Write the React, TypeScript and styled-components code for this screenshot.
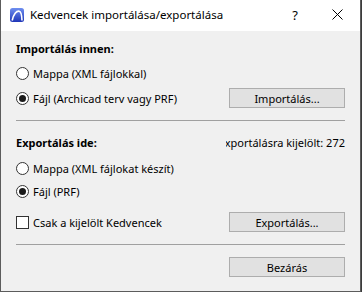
import styled, { createGlobalStyle } from "styled-components";

const GlobalStyle = createGlobalStyle`
  html, body {
    margin: 0;
    padding: 0;
    background: #3b3b3b;
  }
  body {
    font-family: "Noto Sans", "Liberation Sans", sans-serif;
    font-size: 11px;
    color: #000;
  }
`;

const ArchicadIcon = () => (
  <svg width="14" height="14" viewBox="0 0 14 14">
    <defs>
      <linearGradient id="acg" x1="0" y1="0" x2="0" y2="1">
        <stop offset="0" stopColor="#6f8ff0" />
        <stop offset="1" stopColor="#1f36b8" />
      </linearGradient>
    </defs>
    <rect x="0" y="0" width="14" height="14" rx="2.5" fill="url(#acg)" />
    <path d="M2.2 12.5 C3.5 6 6.5 2.8 9.2 3.2 C11 3.5 11.8 6.5 12 12.5" fill="none" stroke="#fff" strokeWidth="1.6" />
  </svg>
);

const Radio = ({ checked }: { checked?: boolean }) => (
  <RadioCircle>{checked && <RadioDot />}</RadioCircle>
);

const App = () => (
  <>
    <GlobalStyle />
    <Window>
      <TitleBar>
        <IconWrap>
          <ArchicadIcon />
        </IconWrap>
        <Title>Kedvencek importálása/exportálása</Title>
        <HelpButton>?</HelpButton>
        <CloseButton>
          <svg width="11" height="11" viewBox="0 0 11 11">
            <path d="M0.5 0.5 L10.5 10.5 M10.5 0.5 L0.5 10.5" stroke="#000" strokeWidth="1" />
          </svg>
        </CloseButton>
      </TitleBar>
      <Body>
        <Row $h={24} $mt={5}>
          <Heading>Importálás innen:</Heading>
        </Row>
        <Row $h={24} $mt={1}>
          <Option>
            <Radio />
            <span>Mappa (XML fájlokkal)</span>
          </Option>
        </Row>
        <Row $h={24} $mt={1}>
          <Option>
            <Radio checked />
            <span>Fájl (Archicad terv vagy PRF)</span>
          </Option>
          <Button>Importálás...</Button>
        </Row>
        <Separator $mt={10} />
        <Row $h={24} $mt={9}>
          <Heading>Exportálás ide:</Heading>
          <Counter>
            <span>Exportálásra kijelölt: 272</span>
          </Counter>
        </Row>
        <Row $h={24} $mt={2}>
          <Option>
            <Radio />
            <span>Mappa (XML fájlokat készít)</span>
          </Option>
        </Row>
        <Row $h={24} $mt={-1}>
          <Option>
            <Radio checked />
            <span>Fájl (PRF)</span>
          </Option>
        </Row>
        <Row $h={24} $mt={7}>
          <Option>
            <CheckBox />
            <span>Csak a kijelölt Kedvencek</span>
          </Option>
          <Button>Exportálás...</Button>
        </Row>
        <Separator $mt={10} />
        <Row $h={22} $mt={11}>
          <span />
          <Button>Bezárás</Button>
        </Row>
      </Body>
    </Window>
  </>
);

const Window = styled.div`
  width: 359px;
  height: 291px;
  background: #f0f0f0;
  border: 1px solid #5c5c5c;
  border-top: none;
  display: flex;
  flex-direction: column;
`;

const TitleBar = styled.div`
  height: 31px;
  background: #fff;
  display: flex;
  align-items: center;
  flex-shrink: 0;
`;

const IconWrap = styled.div`
  width: 14px;
  height: 14px;
  margin-left: 9px;
  margin-top: -1px;
  display: flex;
`;

const Title = styled.div`
  margin-left: 6px;
  font-size: 11.5px;
  flex: 1;
  margin-top: -2px;
`;

const HelpButton = styled.div`
  width: 46px;
  margin-right: -4px;
  text-align: center;
  font-size: 13px;
  margin-top: -2px;
`;

const CloseButton = styled.div`
  width: 46px;
  display: flex;
  justify-content: center;
  margin-top: -2px;
`;

const Body = styled.div`
  padding: 0 15px;
  display: flex;
  flex-direction: column;
`;

const Row = styled.div<{ $h: number; $mt: number }>`
  height: ${(p) => p.$h}px;
  margin-top: ${(p) => p.$mt}px;
  display: flex;
  align-items: center;
  justify-content: space-between;
`;

const Heading = styled.div`
  font-weight: bold;
`;

const Counter = styled.div`
  width: 119px;
  overflow: hidden;
  display: flex;
  justify-content: flex-end;
  white-space: nowrap;
`;

const Option = styled.label`
  display: flex;
  align-items: center;
  gap: 4px;
`;

const RadioCircle = styled.span`
  width: 11px;
  height: 11px;
  border: 1px solid #333;
  border-radius: 50%;
  background: #fff;
  display: flex;
  align-items: center;
  justify-content: center;
`;

const RadioDot = styled.span`
  width: 7px;
  height: 7px;
  border-radius: 50%;
  background: #1a1a1a;
`;

const CheckBox = styled.span`
  width: 11px;
  height: 11px;
  border: 1px solid #333;
  background: #fff;
`;

const Button = styled.div`
  width: 114px;
  height: 18px;
  background: #e1e1e1;
  border: 1px solid #adadad;
  display: flex;
  align-items: center;
  justify-content: center;
`;

const Separator = styled.div<{ $mt: number }>`
  height: 1px;
  margin-top: ${(p) => p.$mt}px;
  background: #a0a0a0;
`;

export default App;
